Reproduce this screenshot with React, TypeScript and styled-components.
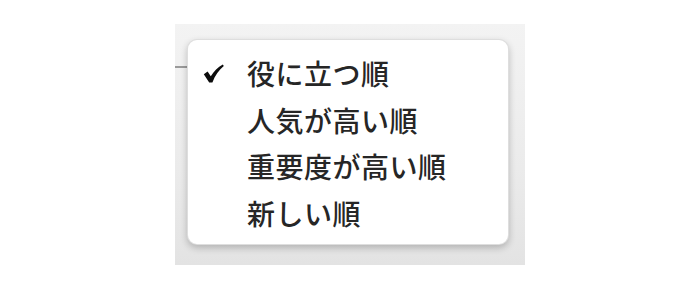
import React from 'react';
import styled, { createGlobalStyle } from 'styled-components';

const GlobalStyle = createGlobalStyle`
    html, body {
        margin: 0;
        padding: 0;
        background: #ffffff;
    }
`;

const Page = styled.div`
    width: 700px;
    height: 292px;
    display: flex;
    justify-content: center;
    padding-top: 24px;
    box-sizing: border-box;
`;

const Backdrop = styled.div`
    position: relative;
    width: 350px;
    height: 241px;
    box-sizing: border-box;
    padding: 15px 16px 20px 12px;
    background: linear-gradient(to bottom, #f3f3f3 0%, #ebebeb 60%, #e3e3e3 100%);

    /* the separator that runs under the menu */
    &::before {
        content: '';
        position: absolute;
        left: 0;
        top: 42px;
        width: 20px;
        height: 2px;
        background: #9a9a9a;
    }
`;

const Menu = styled.ul`
    position: relative;
    list-style: none;
    margin: 0;
    padding: 10px 0;
    height: 100%;
    box-sizing: border-box;
    background: #ffffff;
    border: 1px solid rgba(0, 0, 0, 0.13);
    border-radius: 10px;
    box-shadow: 0 3px 7px rgba(0, 0, 0, 0.22);
`;

const Item = styled.li`
    display: grid;
    grid-template-columns: 44px 1fr;
    align-items: center;
    height: 46.5px;
    padding-left: 15px;
    font-family: "Noto Sans CJK JP", "Noto Sans", sans-serif;
    font-size: 28px;
    font-weight: 500;
    letter-spacing: 0.5px;
    color: #262626;
    white-space: nowrap;
`;

const CheckMark = styled.svg`
    width: 21px;
    height: 19px;
    display: block;
    margin-top: 1px;
`;

const Label = styled.span`
    line-height: 1;
`;

const options = ['役に立つ順', '人気が高い順', '重要度が高い順', '新しい順'];

const Check: React.FC = () => (
    <CheckMark viewBox="0 0 21 19">
        <path
            d="M0.8 10.2 L4.6 7.6 L7.8 12.2 C10.8 7.2 14.8 3 19.8 0.4 L20.8 2 C16 5.8 12.2 11.2 9.4 18.4 L6.2 18.6 Z"
            fill="#0d0d0d"
        />
    </CheckMark>
);

const App: React.FC = () => {
    const selected = 0;

    return (
        <>
            <GlobalStyle />
            <Page>
                <Backdrop>
                    <Menu>
                        {options.map((label, i) => (
                            <Item key={label}>
                                <span>{i === selected && <Check />}</span>
                                <Label>{label}</Label>
                            </Item>
                        ))}
                    </Menu>
                </Backdrop>
            </Page>
        </>
    );
};

export default App;
